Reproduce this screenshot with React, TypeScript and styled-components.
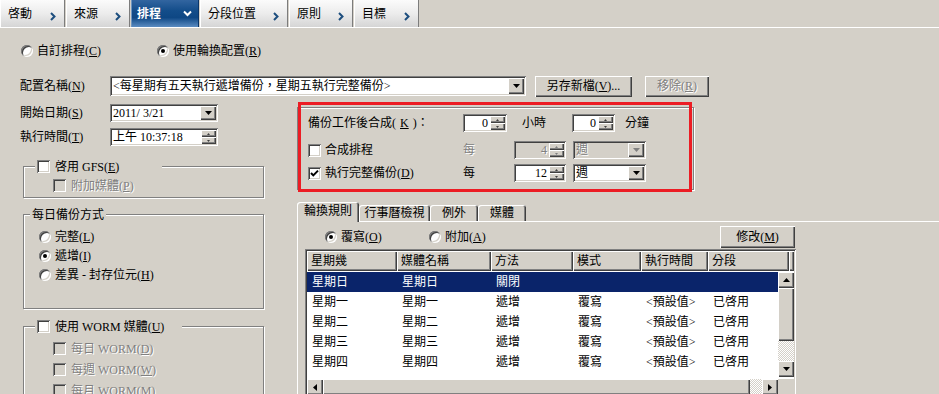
import React from "react";
import styled, { createGlobalStyle, css } from "styled-components";

const BG = "#d4d0c8";
const FONT = `"Liberation Serif", "Noto Sans CJK TC", serif`;

const GlobalStyle = createGlobalStyle`
  html, body { margin: 0; padding: 0; background: ${BG}; }
  body { font-family: ${FONT}; font-size: 12px; line-height: 14px; color: #000; }
  *, *::before, *::after { box-sizing: border-box; }
`;

const raised = css`
  background: ${BG};
  box-shadow: inset 1px 1px #fff, inset -1px -1px #404040, inset -2px -2px #808080;
`;

const sunken = css`
  box-shadow: inset 1px 1px #808080, inset -1px -1px #fff, inset 2px 2px #404040,
    inset -2px -2px ${BG};
`;

const etched = css`
  border: 1px solid #808080;
  box-shadow: inset 1px 1px #fff, 1px 1px #fff;
`;

const greyText = css`
  color: #808080;
  text-shadow: 1px 1px #fff;
`;

const topTabs = [
  { label: "啓動", w: 65 },
  { label: "來源", w: 64 },
  { label: "排程", w: 68, active: true },
  { label: "分段位置", w: 88 },
  { label: "原則", w: 64 },
  { label: "目標", w: 65 },
];

const subTabs = [
  { label: "輪換規則", w: 62, active: true },
  { label: "行事曆檢視", w: 71 },
  { label: "例外", w: 48 },
  { label: "媒體", w: 48 },
];

const columns = [
  { title: "星期幾", w: 90 },
  { title: "媒體名稱", w: 94 },
  { title: "方法", w: 82 },
  { title: "模式", w: 68 },
  { title: "執行時間", w: 67 },
  { title: "分段", w: 81 },
];

const rows = [
  ["星期日", "星期日", "關閉", "", "", ""],
  ["星期一", "星期一", "遞增", "覆寫", "<預設值>", "已啓用"],
  ["星期二", "星期二", "遞增", "覆寫", "<預設值>", "已啓用"],
  ["星期三", "星期三", "遞增", "覆寫", "<預設值>", "已啓用"],
  ["星期四", "星期四", "遞增", "覆寫", "<預設值>", "已啓用"],
];

// ---------- small drawings ----------

type Dir = "up" | "down" | "left" | "right";

const Tri = ({ dir, size = 7, color = "#000" }: { dir: Dir; size?: number; color?: string }) => {
  const h = Math.ceil(size / 2);
  const m = size / 2;
  if (dir === "up" || dir === "down") {
    const d = dir === "up" ? `M0 ${h}L${m} 0L${size} ${h}Z` : `M0 0L${size} 0L${m} ${h}Z`;
    return (
      <svg width={size} height={h} viewBox={`0 0 ${size} ${h}`}>
        <path d={d} fill={color} />
      </svg>
    );
  }
  const d = dir === "left" ? `M${h} 0L0 ${m}L${h} ${size}Z` : `M0 0L${h} ${m}L0 ${size}Z`;
  return (
    <svg width={h} height={size} viewBox={`0 0 ${h} ${size}`}>
      <path d={d} fill={color} />
    </svg>
  );
};

const Chevron = ({ down }: { down?: boolean }) =>
  down ? (
    <svg width="9" height="7" viewBox="0 0 9 7">
      <path d="M1 1.5l3.5 3.5L8 1.5" stroke="#fff" strokeWidth="2" fill="none" />
    </svg>
  ) : (
    <svg width="6" height="9" viewBox="0 0 6 9" style={{ marginTop: 5 }}>
      <path d="M1 1l3.5 3.5L1 8" stroke="#1d4e7e" strokeWidth="2" fill="none" />
    </svg>
  );

const Tick = () => (
  <svg width="9" height="9" viewBox="0 0 9 9">
    <path d="M1 4l2.3 2.4L8 1.6" stroke="#000" strokeWidth="2" fill="none" />
  </svg>
);

// ---------- layout ----------

const Screen = styled.div`
  width: 939px;
  height: 394px;
  overflow: hidden;
  background: ${BG};
`;

const TopBar = styled.div`
  display: flex;
  gap: 1px;
  height: 28px;
  border-bottom: 1px solid #fff;
`;

const TopTab = styled.div<{ $w: number; $active?: boolean }>`
  width: ${(p) => p.$w}px;
  display: flex;
  align-items: center;
  justify-content: space-between;
  padding: 0 8px 0 7px;
  border-left: 1px solid #fff;
  border-right: 1px solid #7c7c7c;
  background: linear-gradient(#fbfbfb, #ececec 50%, #d5d5d5);
  white-space: nowrap;
  ${(p) =>
    p.$active &&
    css`
      padding: 0 6px 0 5px;
      color: #fff;
      font-weight: bold;
      border-left-color: #6d95c0;
      border-right-color: #0b3668;
      background: linear-gradient(#3265a0, #134d8a 40%, #0e4784 65%, #5b8cc2);
    `}
`;

const Body = styled.div`
  padding: 15px 0 0 20px;
`;

const ModeRow = styled.div`
  display: flex;
  align-items: center;
  height: 16px;
  padding-left: 1px;
`;

const Choice = styled.div<{ $w?: number; $off?: boolean }>`
  display: flex;
  align-items: center;
  gap: 4px;
  height: 13px;
  flex: none;
  width: ${(p) => (p.$w ? `${p.$w}px` : "auto")};
  white-space: nowrap;
  ${(p) => p.$off && greyText}
`;

const Radio = styled.span<{ $on?: boolean }>`
  position: relative;
  width: 12px;
  height: 12px;
  flex: none;
  border-radius: 50%;
  background: #fff;
  ${sunken}
  &::after {
    content: "";
    display: ${(p) => (p.$on ? "block" : "none")};
    position: absolute;
    left: 4px;
    top: 4px;
    width: 4px;
    height: 4px;
    border-radius: 50%;
    background: #000;
  }
`;

const Check = styled.span<{ $off?: boolean }>`
  width: 13px;
  height: 13px;
  flex: none;
  display: flex;
  align-items: center;
  justify-content: center;
  background: ${(p) => (p.$off ? BG : "#fff")};
  ${sunken}
`;

const Key = styled.u`
  text-underline-offset: 1px;
`;

const NameRow = styled.div`
  display: flex;
  align-items: center;
  height: 22px;
  margin-top: 16px;
`;

const FieldLabel = styled.span`
  width: 90px;
  flex: none;
  white-space: nowrap;
`;

const Field = styled.div<{ $w: number; $h?: number; $off?: boolean }>`
  width: ${(p) => p.$w}px;
  height: ${(p) => p.$h ?? 18}px;
  flex: none;
  display: flex;
  padding: 2px;
  background: ${(p) => (p.$off ? BG : "#fff")};
  ${sunken}
`;

const FieldText = styled.span<{ $right?: boolean; $off?: boolean }>`
  flex: 1;
  min-width: 0;
  display: flex;
  align-items: center;
  justify-content: ${(p) => (p.$right ? "flex-end" : "flex-start")};
  padding: ${(p) => (p.$right ? "0 2px 0 0" : "0 0 0 1px")};
  overflow: hidden;
  white-space: nowrap;
  ${(p) => p.$off && greyText}
`;

const DropButton = styled.span`
  width: 16px;
  flex: none;
  display: flex;
  align-items: center;
  justify-content: center;
  ${raised}
`;

const SpinColumn = styled.span`
  width: 15px;
  flex: none;
  display: flex;
  flex-direction: column;
`;

const SpinHalf = styled.span`
  flex: 1;
  display: flex;
  align-items: center;
  justify-content: center;
  ${raised}
`;

const PushButton = styled.div<{ $w: number; $h?: number; $ml?: number; $off?: boolean }>`
  width: ${(p) => p.$w}px;
  height: ${(p) => p.$h ?? 21}px;
  margin-left: ${(p) => p.$ml ?? 0}px;
  flex: none;
  display: flex;
  align-items: center;
  justify-content: center;
  white-space: nowrap;
  ${raised}
  ${(p) => p.$off && greyText}
`;

const Lower = styled.div`
  display: flex;
  align-items: flex-start;
  margin-top: 5px;
`;

const LeftCol = styled.div`
  width: 277px;
  flex: none;
  padding-top: 2px;
`;

const FormRow = styled.div`
  display: flex;
  align-items: center;
  height: 18px;
  & + & {
    margin-top: 6px;
  }
`;

const Group = styled.fieldset<{ $top: number }>`
  margin: ${(p) => p.$top}px 0 0 3px;
  padding: 0;
  width: 241px;
  min-inline-size: 0;
  ${etched}
`;

const Legend = styled.legend<{ $indent: number; $w?: number }>`
  margin-left: ${(p) => p.$indent}px;
  padding: 0 2px;
  width: ${(p) => (p.$w ? `${p.$w}px` : "auto")};
  height: 13px;
  display: flex;
  align-items: center;
  gap: 5px;
  background: ${BG};
  white-space: nowrap;
`;

const GroupBody = styled.div<{ $pad: string; $gap: number }>`
  display: flex;
  flex-direction: column;
  gap: ${(p) => p.$gap}px;
  padding: ${(p) => p.$pad};
`;

const SubItem = styled.div<{ $off?: boolean }>`
  display: flex;
  align-items: center;
  gap: 5px;
  height: 13px;
  white-space: nowrap;
  ${(p) => p.$off && greyText}
`;

const RightCol = styled.div`
  flex: 1;
  min-width: 0;
  padding-top: 5px;
`;

const MergeBox = styled.div`
  position: relative;
  width: 397px;
  height: 83px;
  padding: 6px 0 0 9px;
  ${etched}
`;

const RedMark = styled.div`
  position: absolute;
  top: -6px;
  left: 0;
  right: 1px;
  bottom: -3px;
  border: 3px solid #ec1c24;
  pointer-events: none;
`;

const MergeRow = styled.div<{ $mt?: number }>`
  display: flex;
  align-items: center;
  height: 18px;
  margin-top: ${(p) => p.$mt ?? 0}px;
`;

const LabelCell = styled.div`
  width: 156px;
  flex: none;
  display: flex;
  align-items: center;
  gap: 4px;
  padding-left: 1px;
  white-space: nowrap;
`;

const Unit = styled.span<{ $w?: number; $pl?: number; $off?: boolean }>`
  width: ${(p) => (p.$w ? `${p.$w}px` : "auto")};
  padding-left: ${(p) => p.$pl ?? 0}px;
  flex: none;
  white-space: nowrap;
  ${(p) => p.$off && greyText}
`;

const SubTabs = styled.div`
  position: relative;
  z-index: 1;
  display: flex;
  align-items: flex-end;
  height: 19px;
  margin-top: 12px;
`;

const SubTab = styled.div<{ $w: number; $active?: boolean }>`
  width: ${(p) => p.$w}px;
  height: ${(p) => (p.$active ? 20 : 16)}px;
  margin-bottom: ${(p) => (p.$active ? -1 : 0)}px;
  padding-bottom: ${(p) => (p.$active ? 2 : 0)}px;
  display: flex;
  align-items: center;
  justify-content: center;
  white-space: nowrap;
  background: ${BG};
  border-radius: 3px 3px 0 0;
  box-shadow: inset 1px 1px #fff, inset -1px 0 #404040, inset -2px 0 #808080;
`;

const Panel = styled.div`
  height: 200px;
  padding: 4px 0 0 7px;
  border-top: 1px solid #fff;
  border-left: 1px solid #fff;
`;

const PanelTop = styled.div`
  width: 491px;
  height: 22px;
  display: flex;
  align-items: center;
  padding-left: 20px;
`;

const ListFrame = styled.div`
  width: 491px;
  height: 148px;
  margin-top: 1px;
  padding: 2px;
  display: flex;
  flex-direction: column;
  background: ${BG};
  ${sunken}
`;

const HeaderRow = styled.div`
  display: flex;
  height: 20px;
  flex: none;
`;

const HeaderCell = styled.div<{ $w?: number }>`
  width: ${(p) => (p.$w ? `${p.$w}px` : "auto")};
  flex: ${(p) => (p.$w ? "none" : "1")};
  display: flex;
  align-items: center;
  padding-left: 4px;
  white-space: nowrap;
  ${raised}
`;

const ListBody = styled.div`
  display: flex;
  height: 108px;
  flex: none;
  background: #fff;
`;

const RowsArea = styled.div`
  flex: 1;
  padding-top: 1px;
`;

const Row = styled.div<{ $sel?: boolean }>`
  display: flex;
  align-items: center;
  height: 20px;
  background: ${(p) => (p.$sel ? "#0a246a" : "#fff")};
  color: ${(p) => (p.$sel ? "#fff" : "#000")};
`;

const Cell = styled.span<{ $w?: number }>`
  width: ${(p) => (p.$w ? `${p.$w}px` : "auto")};
  flex: ${(p) => (p.$w ? "none" : "1")};
  padding-left: 5px;
  white-space: nowrap;
`;

const VScroll = styled.div`
  width: 16px;
  flex: none;
  display: flex;
  flex-direction: column;
  padding: 1px 0 2px;
`;

const HScroll = styled.div`
  display: flex;
  height: 16px;
  flex: none;
`;

const ScrollButton = styled.span`
  width: 16px;
  height: 16px;
  flex: none;
  display: flex;
  align-items: center;
  justify-content: center;
  ${raised}
`;

const Thumb = styled.span<{ $len: number; $vertical?: boolean }>`
  flex: none;
  ${(p) => (p.$vertical ? `height: ${p.$len}px;` : `width: ${p.$len}px;`)}
  ${raised}
`;

const Track = styled.span`
  flex: 1;
  background: repeating-conic-gradient(#fff 0 25%, ${BG} 0 50%) 0 0 / 2px 2px;
`;

const Corner = styled.span`
  width: 16px;
  flex: none;
  background: ${BG};
`;

// ---------- pieces ----------

const Combo = ({ w, text, off }: { w: number; text: React.ReactNode; off?: boolean }) => (
  <Field $w={w} $h={18} $off={off}>
    <FieldText $off={off}>{text}</FieldText>
    <DropButton>
      <Tri dir="down" color={off ? "#808080" : "#000"} />
    </DropButton>
  </Field>
);

const Spin = ({ w, value, off }: { w: number; value: React.ReactNode; off?: boolean }) => (
  <Field $w={w} $off={off}>
    <FieldText $right $off={off}>
      {value}
    </FieldText>
    <SpinColumn>
      <SpinHalf>
        <Tri dir="up" size={3} color={off ? "#808080" : "#404040"} />
      </SpinHalf>
      <SpinHalf>
        <Tri dir="down" size={3} color={off ? "#808080" : "#404040"} />
      </SpinHalf>
    </SpinColumn>
  </Field>
);

const App = () => {
  return (
    <Screen>
      <GlobalStyle />
      <TopBar>
        {topTabs.map((t) => (
          <TopTab key={t.label} $w={t.w} $active={t.active}>
            <span>{t.label}</span>
            <Chevron down={t.active} />
          </TopTab>
        ))}
      </TopBar>

      <Body>
        <ModeRow>
          <Choice $w={136}>
            <Radio />
            <span>
              自訂排程(<Key>C</Key>)
            </span>
          </Choice>
          <Choice>
            <Radio $on />
            <span>
              使用輪換配置(<Key>R</Key>)
            </span>
          </Choice>
        </ModeRow>

        <NameRow>
          <FieldLabel>
            配置名稱(<Key>N</Key>)
          </FieldLabel>
          <Field $w={416} $h={20}>
            <FieldText>&lt;每星期有五天執行遞增備份，星期五執行完整備份&gt;</FieldText>
            <DropButton>
              <Tri dir="down" />
            </DropButton>
          </Field>
          <PushButton $w={97} $ml={9}>
            另存新檔(<Key>V</Key>)...
          </PushButton>
          <PushButton $w={64} $ml={13} $off>
            移除(<Key>R</Key>)
          </PushButton>
        </NameRow>

        <Lower>
          <LeftCol>
            <FormRow>
              <FieldLabel>
                開始日期(<Key>S</Key>)
              </FieldLabel>
              <Combo w={108} text="2011/ 3/21" />
            </FormRow>
            <FormRow>
              <FieldLabel>
                執行時間(<Key>T</Key>)
              </FieldLabel>
              <Spin w={108} value={<span style={{ flex: 1, paddingLeft: 1 }}>上午 10:37:18</span>} />
            </FormRow>

            <Group $top={14}>
              <Legend $indent={11} $w={127}>
                <Check />
                <span>
                  啓用 GFS(<Key>E</Key>)
                </span>
              </Legend>
              <GroupBody $pad="6px 0 5px 29px" $gap={0}>
                <SubItem $off>
                  <Check $off />
                  <span>
                    附加媒體(<Key>P</Key>)
                  </span>
                </SubItem>
              </GroupBody>
            </Group>

            <Group $top={10}>
              <Legend $indent={6}>每日備份方式</Legend>
              <GroupBody $pad="9px 0 27px 15px" $gap={6}>
                <Choice>
                  <Radio />
                  <span>
                    完整(<Key>L</Key>)
                  </span>
                </Choice>
                <Choice>
                  <Radio $on />
                  <span>
                    遞增(<Key>I</Key>)
                  </span>
                </Choice>
                <Choice>
                  <Radio />
                  <span>
                    差異 - 封存位元(<Key>H</Key>)
                  </span>
                </Choice>
              </GroupBody>
            </Group>

            <Group $top={11}>
              <Legend $indent={11} $w={147}>
                <Check />
                <span>
                  使用 WORM 媒體(<Key>U</Key>)
                </span>
              </Legend>
              <GroupBody $pad="9px 0 20px 29px" $gap={8}>
                <SubItem $off>
                  <Check $off />
                  <span>
                    每日 WORM(<Key>D</Key>)
                  </span>
                </SubItem>
                <SubItem $off>
                  <Check $off />
                  <span>
                    每週 WORM(<Key>W</Key>)
                  </span>
                </SubItem>
                <SubItem $off>
                  <Check $off />
                  <span>
                    每月 WORM(<Key>M</Key>)
                  </span>
                </SubItem>
              </GroupBody>
            </Group>
          </LeftCol>

          <RightCol>
            <MergeBox>
              <MergeRow>
                <LabelCell>
                  備份工作後合成(<Key>K</Key>)：
                </LabelCell>
                <Spin w={44} value="0" />
                <Unit $w={65} $pl={15}>
                  小時
                </Unit>
                <Spin w={43} value="0" />
                <Unit $pl={10}>分鐘</Unit>
              </MergeRow>
              <MergeRow $mt={9}>
                <LabelCell>
                  <Check />
                  <span>合成排程</span>
                </LabelCell>
                <Unit $w={51} $off>
                  每
                </Unit>
                <Spin w={52} value="4" off />
                <Unit $w={7} />
                <Combo w={73} text="週" off />
              </MergeRow>
              <MergeRow $mt={5}>
                <LabelCell>
                  <Check>
                    <Tick />
                  </Check>
                  <span>
                    執行完整備份(<Key>D</Key>)
                  </span>
                </LabelCell>
                <Unit $w={51}>每</Unit>
                <Spin w={52} value="12" />
                <Unit $w={7} />
                <Combo w={73} text="週" />
              </MergeRow>
              <RedMark />
            </MergeBox>

            <SubTabs>
              {subTabs.map((t) => (
                <SubTab key={t.label} $w={t.w} $active={t.active}>
                  {t.label}
                </SubTab>
              ))}
            </SubTabs>

            <Panel>
              <PanelTop>
                <Choice $w={104}>
                  <Radio $on />
                  <span>
                    覆寫(<Key>O</Key>)
                  </span>
                </Choice>
                <Choice>
                  <Radio />
                  <span>
                    附加(<Key>A</Key>)
                  </span>
                </Choice>
                <PushButton $w={75} $h={22} style={{ marginLeft: "auto", marginRight: 1 }}>
                  修改(<Key>M</Key>)
                </PushButton>
              </PanelTop>

              <ListFrame>
                <HeaderRow>
                  {columns.map((c) => (
                    <HeaderCell key={c.title} $w={c.w}>
                      {c.title}
                    </HeaderCell>
                  ))}
                  <HeaderCell />
                </HeaderRow>
                <ListBody>
                  <RowsArea>
                    {rows.map((r, i) => (
                      <Row key={i} $sel={i === 0}>
                        {r.map((v, j) => (
                          <Cell key={j} $w={j < 5 ? columns[j].w : undefined}>
                            {v}
                          </Cell>
                        ))}
                      </Row>
                    ))}
                  </RowsArea>
                  <VScroll>
                    <ScrollButton>
                      <Tri dir="up" />
                    </ScrollButton>
                    <Thumb $vertical $len={53} />
                    <Track />
                    <ScrollButton>
                      <Tri dir="down" />
                    </ScrollButton>
                  </VScroll>
                </ListBody>
                <HScroll>
                  <ScrollButton>
                    <Tri dir="left" />
                  </ScrollButton>
                  <Thumb $len={427} />
                  <Track />
                  <ScrollButton>
                    <Tri dir="right" />
                  </ScrollButton>
                  <Corner />
                </HScroll>
              </ListFrame>
            </Panel>
          </RightCol>
        </Lower>
      </Body>
    </Screen>
  );
};

export default App;
